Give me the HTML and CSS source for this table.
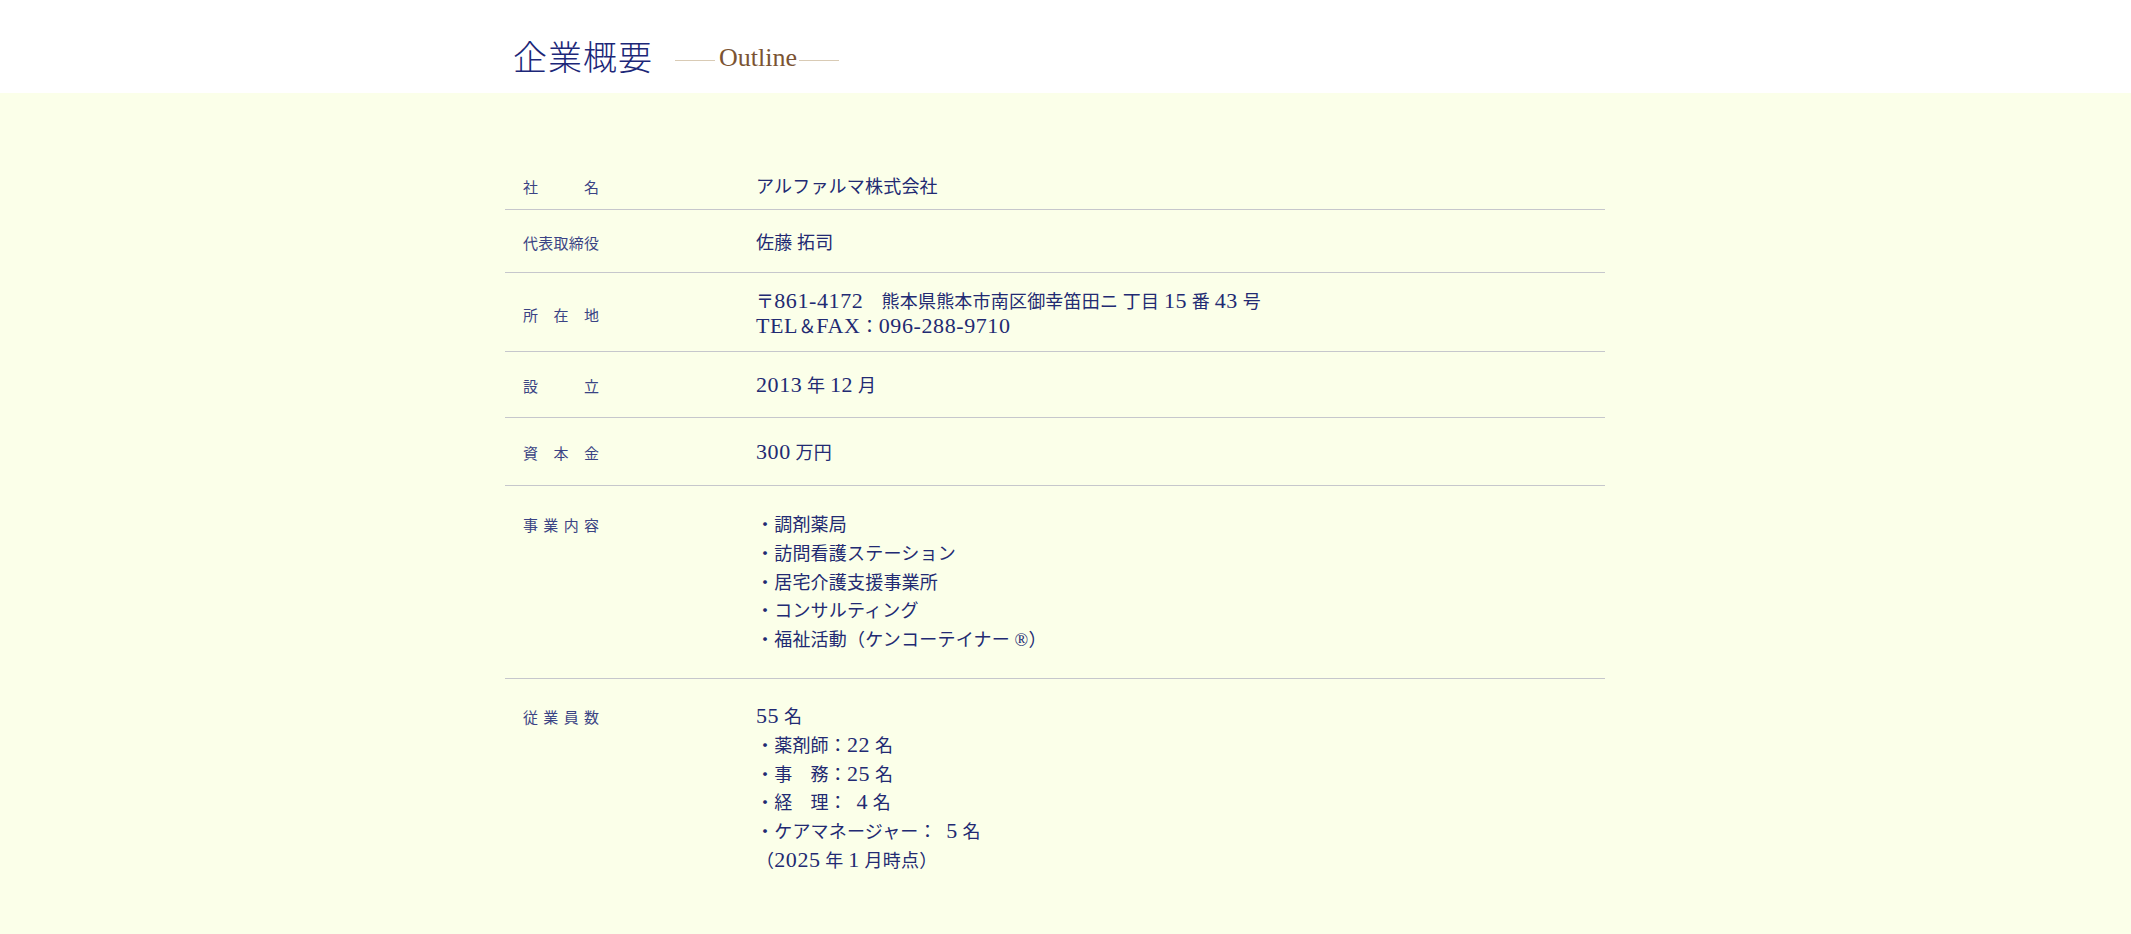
FILE: index.html
```html
<!DOCTYPE html>
<html lang="ja">
<head>
<meta charset="utf-8">
<title>企業概要</title>
<link rel="stylesheet" href="styles.css">
</head>
<body>
<header class="head">
  <div class="container head-inner">
    <h2 class="title">企業概要</h2>
    <span class="sub"><span class="sub-line"></span><span class="sub-text">Outline</span><span class="sub-line"></span></span>
  </div>
</header>
<main class="content">
  <div class="container">
    <dl class="table">
      <div class="row row--name">
        <dt class="label"><span class="label-text">社名</span></dt>
        <dd class="value">アルファルマ株式会社</dd>
      </div>
      <div class="row row--ceo">
        <dt class="label"><span class="label-text">代表取締役</span></dt>
        <dd class="value">佐藤 拓司</dd>
      </div>
      <div class="row row--addr">
        <dt class="label"><span class="label-text">所在地</span></dt>
        <dd class="value value--addr">〒<span class="num">861-4172</span>　熊本県熊本市南区御幸笛田ニ 丁目 <span class="num">15</span> 番 <span class="num">43</span> 号<br><span class="num">TEL</span>＆<span class="num">FAX</span>：<span class="num">096-288-9710</span></dd>
      </div>
      <div class="row row--est">
        <dt class="label"><span class="label-text">設立</span></dt>
        <dd class="value"><span class="num">2013</span> 年 <span class="num">12</span> 月</dd>
      </div>
      <div class="row row--cap">
        <dt class="label"><span class="label-text">資本金</span></dt>
        <dd class="value"><span class="num">300</span> 万円</dd>
      </div>
      <div class="row row--top row--biz">
        <dt class="label label--list"><span class="label-text">事業内容</span></dt>
        <dd class="value value--list">
          <ul class="list">
            <li>・調剤薬局</li>
            <li>・訪問看護ステーション</li>
            <li>・居宅介護支援事業所</li>
            <li>・コンサルティング</li>
            <li>・福祉活動（ケンコーテイナー ®）</li>
          </ul>
        </dd>
      </div>
      <div class="row row--top row--staff">
        <dt class="label label--list"><span class="label-text">従業員数</span></dt>
        <dd class="value value--list">
          <ul class="list">
            <li><span class="num">55</span> 名</li>
            <li>・薬剤師：<span class="num">22</span> 名</li>
            <li>・事　務：<span class="num">25</span> 名</li>
            <li>・経　理：&nbsp;&nbsp;<span class="num">4</span> 名</li>
            <li>・ケアマネージャー：&nbsp;&nbsp;<span class="num">5</span> 名</li>
            <li>（<span class="num">2025</span> 年 <span class="num">1</span> 月時点）</li>
          </ul>
        </dd>
      </div>
    </dl>
  </div>
</main>
</body>
</html>
```

FILE: styles.css
```css
html, body {
  margin: 0;
  padding: 0;
  background: #ffffff;
}

body {
  font-family: "Liberation Serif", "Noto Sans CJK JP", serif;
  color: #1d2570;
}

.head {
  background: #ffffff;
  height: 93px;
  padding-right: 21px;
}

.container {
  width: 1100px;
  margin: 0 auto;
}

.head-inner {
  display: flex;
  align-items: flex-start;
  padding: 39px 0 0 8px;
  box-sizing: border-box;
}

.title {
  margin: 0;
  font-family: "Noto Sans CJK JP", sans-serif;
  font-size: 34px;
  line-height: 34px;
  font-weight: 300;
  color: #1c2778;
  letter-spacing: 1px;
}

.sub {
  display: flex;
  align-items: flex-start;
  margin: 6px 0 0 22px;
  line-height: 26px;
}

.sub-line {
  display: block;
  width: 40px;
  height: 1px;
  margin-top: 15px;
  background: #d9cbb5;
}

.sub-text {
  font-family: "Liberation Serif", serif;
  font-size: 26px;
  color: #7b5433;
  margin: 0 2px 0 4px;
}

.content {
  background: #fbffe9;
  padding: 64px 21px 40px 0;
}

.table {
  margin: 0;
}

.row {
  display: grid;
  grid-template-columns: 251px 1fr;
  align-items: center;
  border-bottom: 1px solid #c6c7cc;
}

.row--top {
  align-items: start;
}

.row:last-child {
  border-bottom: none;
}

.row--name { padding: 16px 0 8px; }
.row--ceo { padding: 19px 0 15px; }
.row--addr { padding: 17px 0 11px; }
.row--est { padding: 20px 0 17px; }
.row--cap { padding: 21px 0 18px; }
.row--biz { padding: 25px 0 23px; }
.row--staff { padding: 24px 0 60px; }

.label {
  margin: 0;
  padding-left: 18px;
  font-family: "Noto Sans CJK JP", sans-serif;
  font-size: 15px;
  line-height: 28px;
  font-weight: 400;
  color: #3a4384;
}

.label--list {
  line-height: 28.8px;
}

.label-text {
  display: block;
  width: 76px;
  text-align: justify;
  text-align-last: justify;
}

.value {
  margin: 0;
  font-size: 18px;
  letter-spacing: 0.2px;
  line-height: 28px;
  font-weight: 400;
  white-space: nowrap;
  color: #222a72;
}

.value--addr {
  line-height: 25px;
}

.value--list {
  line-height: 28.8px;
}

.num {
  font-family: "Liberation Serif", serif;
  font-size: 22px;
  line-height: 1;
  font-weight: 400;
  letter-spacing: 0.6px;
}

.list {
  list-style: none;
  margin: 0;
  padding: 0;
}
```
